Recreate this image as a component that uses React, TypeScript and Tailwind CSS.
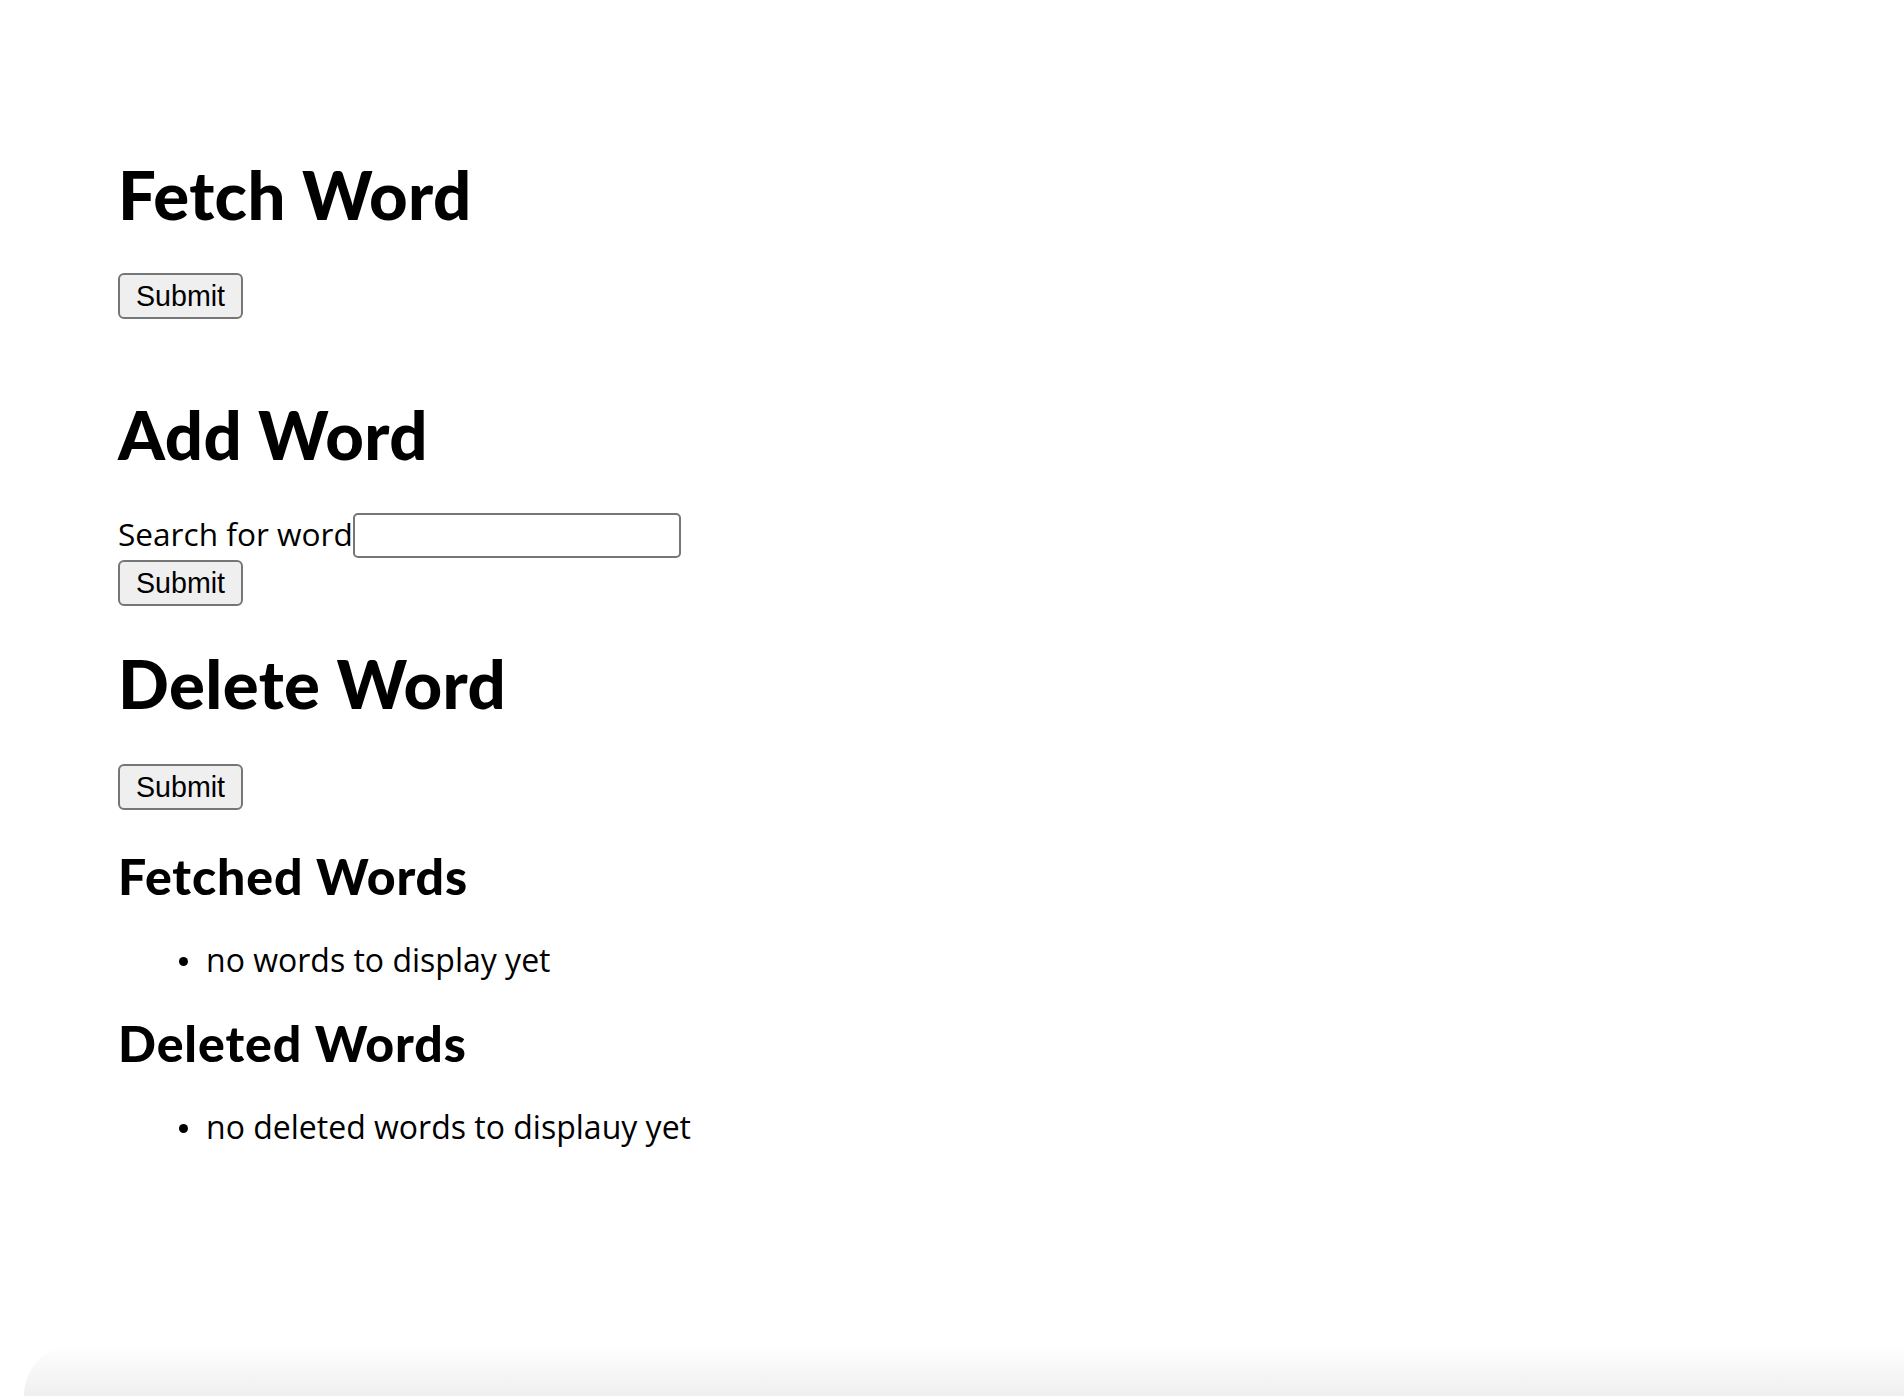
import React, { useState } from 'react'

function SubmitButton() {
  return (
    <button
      type="button"
      className="flex h-[46px] w-[125px] items-center justify-center rounded-[6px] border-2 border-[#767676] bg-[#efefef] font-['Liberation_Sans'] text-[28.6px] leading-none text-black"
    >
      Submit
    </button>
  )
}

function Bullet({ children }: { children: React.ReactNode }) {
  return (
    <li className="flex h-[42px] items-center pl-[61px] text-[32px] leading-[42px]">
      <span className="mr-[18px] h-[9px] w-[9px] shrink-0 translate-y-[1px] rounded-full bg-black" />
      <span>{children}</span>
    </li>
  )
}

export default function App() {
  const [word, setWord] = useState('')

  return (
    <div className="flex min-h-[1396px] flex-col overflow-hidden bg-white font-['Open_Sans'] text-black">
      <div className="pl-[118px] pt-[154px]">
        {/* Fetch */}
        <h1 className="h-[80px] font-['Lato'] text-[67px] font-black leading-[80px] tracking-[0.4px]">Fetch Word</h1>
        <div className="mt-[39px]">
          <SubmitButton />
        </div>

        {/* Add */}
        <h1 className="mt-[75px] h-[80px] font-['Lato'] text-[67px] font-black leading-[80px] tracking-[0.4px]">Add Word</h1>
        <div className="mt-[39px] flex h-[45px] items-start">
          <label className="text-[31.6px] leading-[42px]">Search for word</label>
          <input
            value={word}
            onChange={(e) => setWord(e.target.value)}
            className="h-[45px] w-[328px] rounded-[5px] border-2 border-[#767676] bg-white px-2 text-[28px] outline-none"
          />
        </div>
        <div className="mt-[2px]">
          <SubmitButton />
        </div>

        {/* Delete */}
        <h1 className="mt-[37px] h-[80px] font-['Lato'] text-[67px] font-black leading-[80px] tracking-[0.4px]">Delete Word</h1>
        <div className="mt-[41px]">
          <SubmitButton />
        </div>

        {/* Lists */}
        <h2 className="mt-[36px] h-[60px] font-['Lato'] text-[50px] font-black leading-[60px] tracking-[0.9px]">Fetched Words</h2>
        <ul className="mt-[33px]">
          <Bullet>no words to display yet</Bullet>
        </ul>
        <h2 className="mt-[32px] h-[60px] font-['Lato'] text-[50px] font-black leading-[60px] tracking-[0.9px]">Deleted Words</h2>
        <ul className="mt-[33px]">
          <Bullet>no deleted words to displauy yet</Bullet>
        </ul>
      </div>

      <div className="flex-1" />
      <div className="ml-[24px] h-[52px] rounded-tl-[56px] bg-linear-to-b from-white to-[#efefef]" />
    </div>
  )
}
